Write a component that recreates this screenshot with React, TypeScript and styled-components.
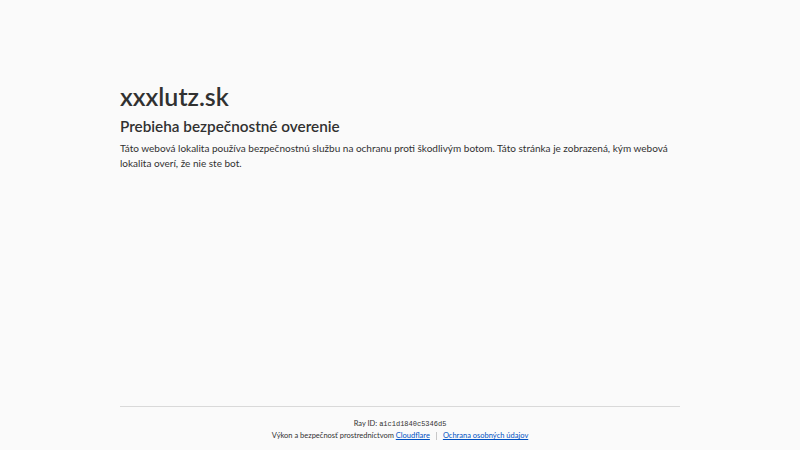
import styled, { createGlobalStyle } from 'styled-components';

const GlobalStyle = createGlobalStyle`
  html, body {
    margin: 0;
    padding: 0;
    background: #fafafa;
    color: #313131;
    font-family: Lato, "Noto Sans", sans-serif;
  }
`;

const Page = styled.div`
  min-height: 450px;
  display: flex;
  flex-direction: column;
`;

const Main = styled.main`
  flex: 1;
  width: 560px;
  margin: 0 auto;
  padding-top: 79px;
`;

const SiteName = styled.h1`
  margin: 0;
  font-size: 25px;
  line-height: 34px;
  font-weight: 600;
`;

const Heading = styled.h2`
  margin: 2px 0 4px;
  font-size: 15.3px;
  line-height: 22px;
  font-weight: 600;
`;

const Text = styled.p`
  margin: 0;
  font-size: 10px;
  line-height: 15px;
`;

const Footer = styled.footer`
  width: 560px;
  margin: 0 auto;
  border-top: 1px solid #d9d9d9;
  padding: 11px 0 8px;
  text-align: center;
  font-size: 7.5px;
  line-height: 12px;
`;

const RayCode = styled.code`
  font-family: "Liberation Mono", monospace;
  font-size: 7px;
`;

const Link = styled.a`
  color: #0051c3;
  text-decoration: underline;
`;

const Sep = styled.span`
  display: inline-block;
  width: 1px;
  height: 8px;
  background: #c8c8c8;
  margin: 0 6px;
  vertical-align: middle;
`;

const App: React.FC = () => {
  return (
    <>
      <GlobalStyle />
      <Page>
        <Main>
          <SiteName>xxxlutz.sk</SiteName>
          <Heading>Prebieha bezpečnostné overenie</Heading>
          <Text>
            Táto webová lokalita používa bezpečnostnú službu na ochranu proti škodlivým botom. Táto stránka je zobrazená, kým webová lokalita overí, že nie ste bot.
          </Text>
        </Main>
        <Footer>
          <div>
            Ray ID: <RayCode>a1c1d1840c5346d5</RayCode>
          </div>
          <div>
            Výkon a bezpečnosť prostredníctvom <Link href="#">Cloudflare</Link>
            <Sep />
            <Link href="#">Ochrana osobných údajov</Link>
          </div>
        </Footer>
      </Page>
    </>
  );
};

export default App;
